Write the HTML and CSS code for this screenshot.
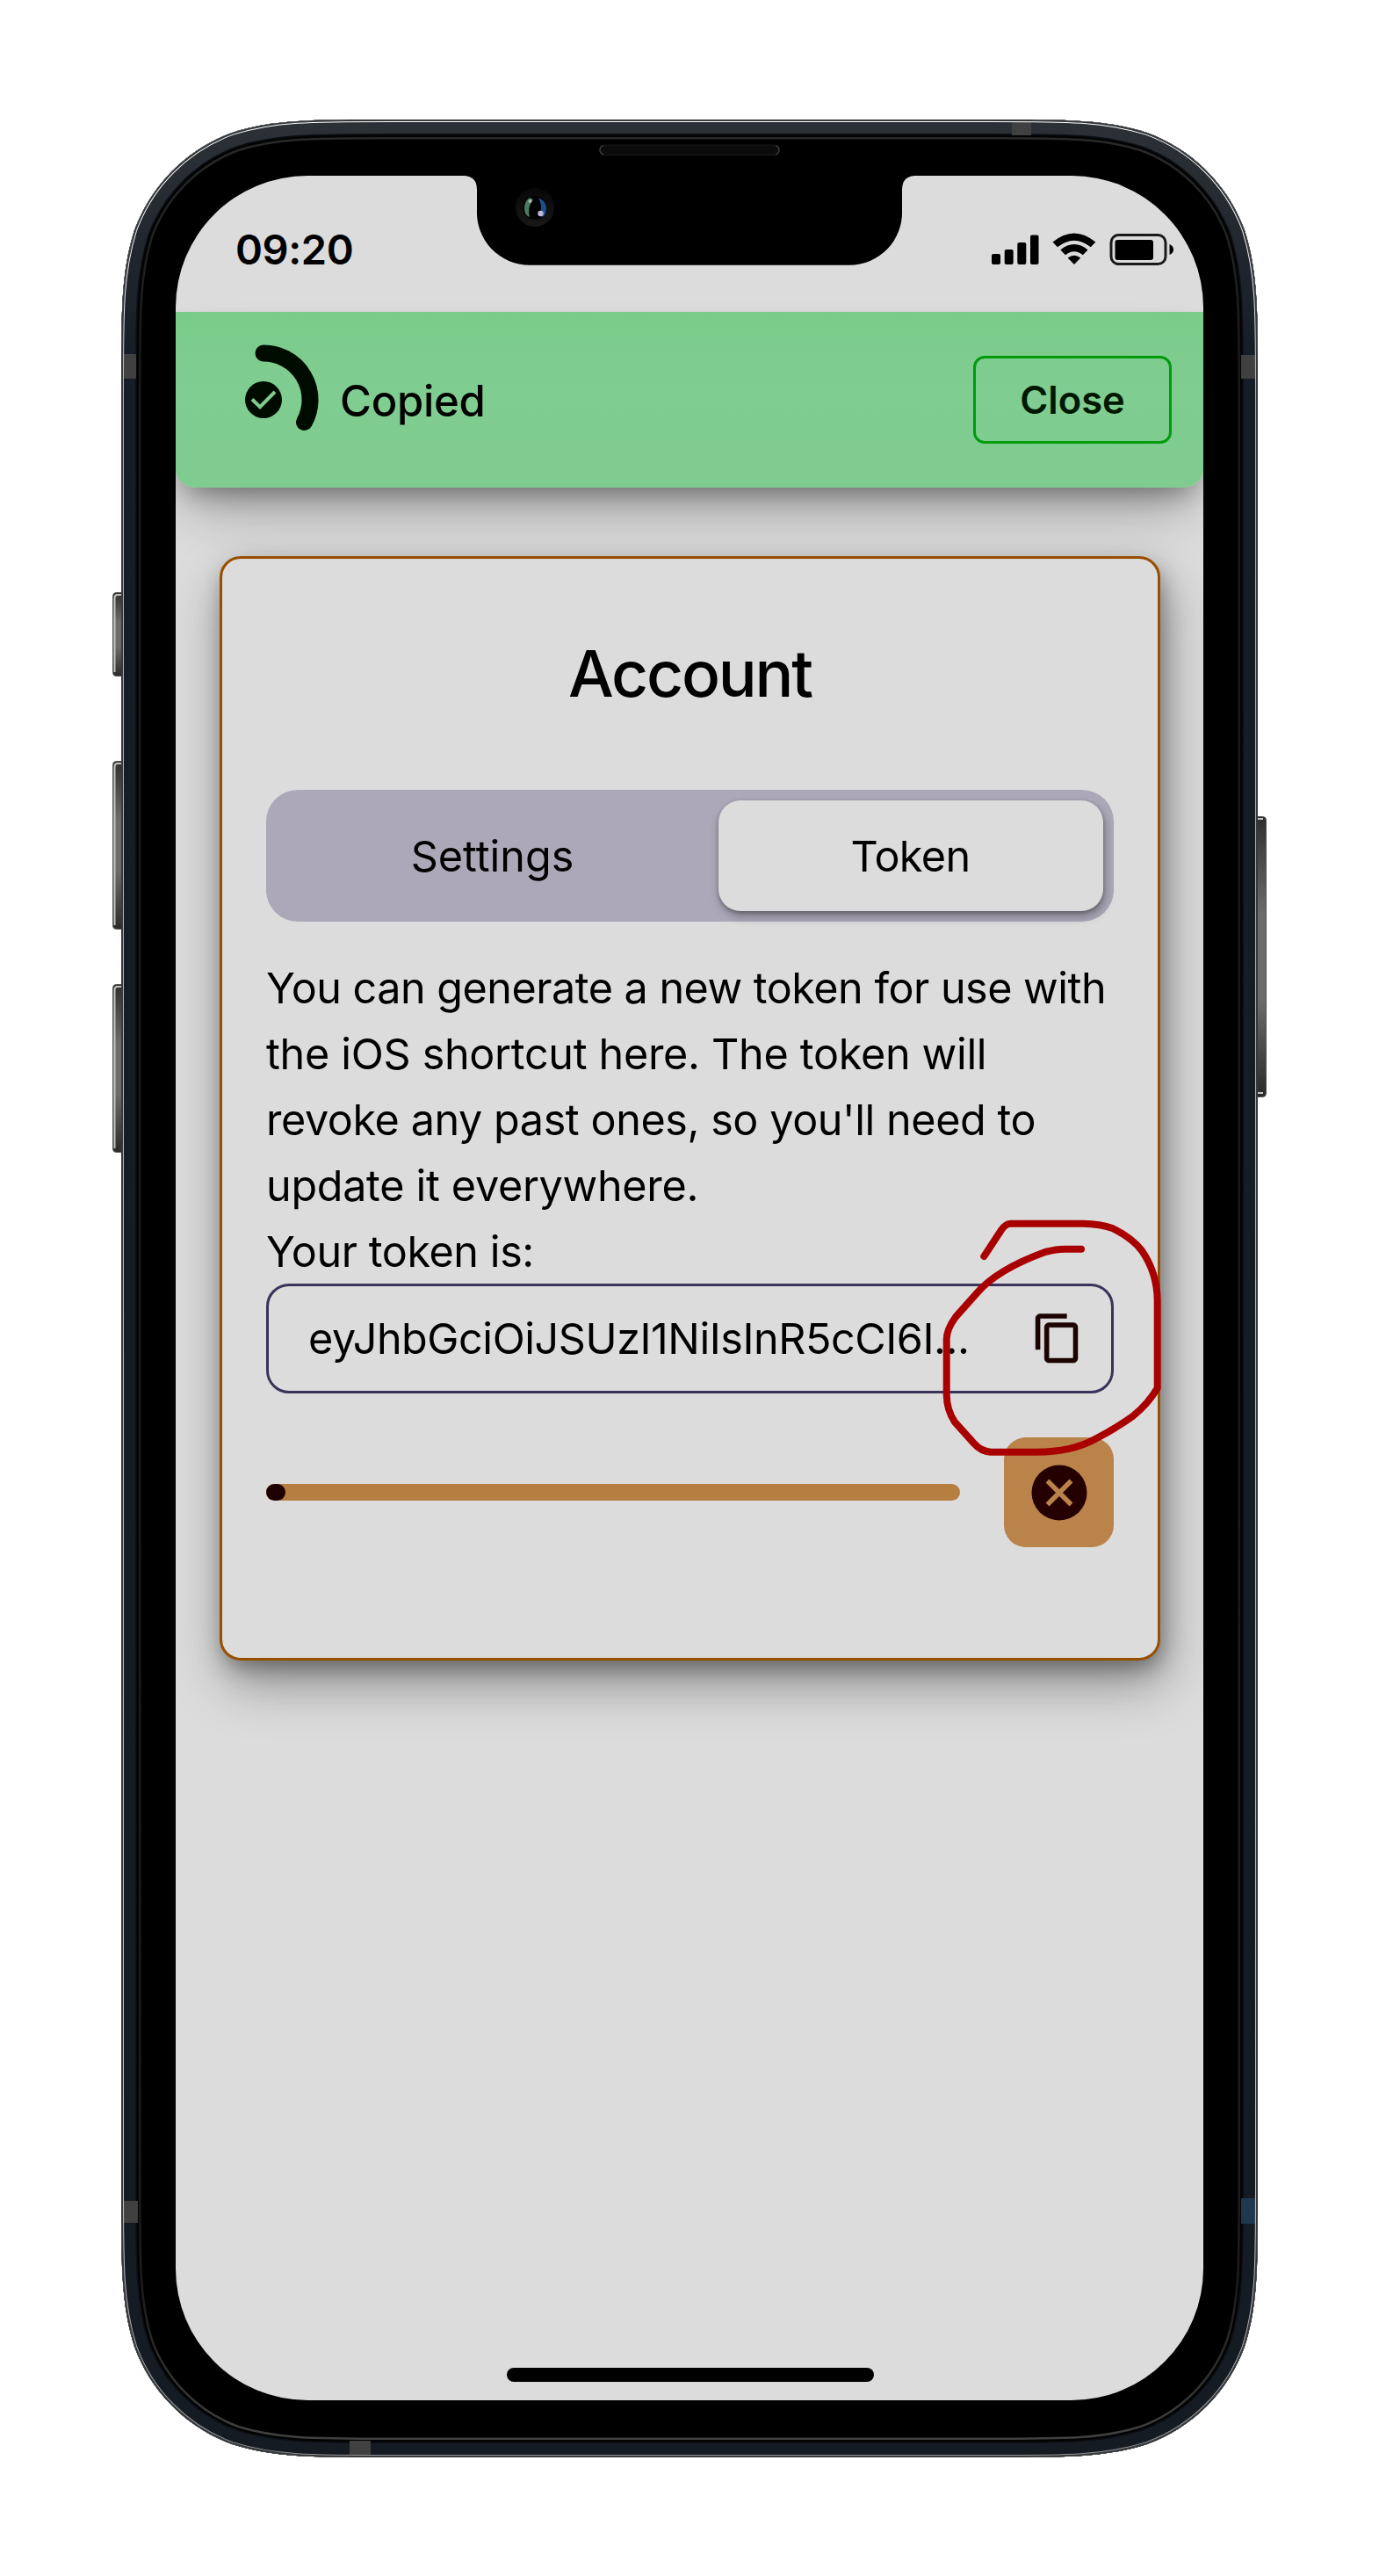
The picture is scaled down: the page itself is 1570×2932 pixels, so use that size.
FILE: index.html
```html
<!DOCTYPE html>
<html lang="en">
<head>
<meta charset="utf-8">
<title>Account</title>
<link rel="stylesheet" href="styles.css">
</head>
<body>
<main class="stage">
  <div class="phone">
    <svg class="phone-body" viewBox="-10 0 1314 2661" aria-hidden="true">
      <defs>
        <path id="shell" d="M305.7 0H988.3C1076.3 0 1120.3 0 1167.7 15C1219.4 33.8 1260.2 74.6 1279 126.3C1294 173.7 1294 217.7 1294 305.7V2355.3C1294 2443.3 1294 2487.3 1279 2534.7C1260.2 2586.4 1219.4 2627.2 1167.7 2646C1120.3 2661 1076.3 2661 988.3 2661H305.7C217.7 2661 173.7 2661 126.3 2646C74.6 2627.2 33.8 2586.4 15 2534.7C0 2487.3 0 2443.3 0 2355.3V305.7C0 217.7 0 173.7 15 126.3C33.8 74.6 74.6 33.8 126.3 15C173.7 0 217.7 0 305.7 0Z"/>
        <clipPath id="shell-clip"><use href="#shell"/></clipPath>
        <linearGradient id="metal" gradientUnits="userSpaceOnUse" x1="0" y1="0" x2="0" y2="2661">
          <stop offset="0" stop-color="#2b3136"/><stop offset=".03" stop-color="#272c32"/>
          <stop offset=".1" stop-color="#171d26"/><stop offset="1" stop-color="#151b22"/>
        </linearGradient>
        <linearGradient id="glint" gradientUnits="userSpaceOnUse" x1="0" y1="0" x2="0" y2="2661">
          <stop offset="0" stop-color="#ffffff"/><stop offset=".07" stop-color="#e8e8f0"/>
          <stop offset=".12" stop-color="#a9abbd"/><stop offset=".9" stop-color="#c0c2cc"/><stop offset="1" stop-color="#8f9296"/>
        </linearGradient>
        <linearGradient id="rim" gradientUnits="userSpaceOnUse" x1="0" y1="0" x2="0" y2="2661">
          <stop offset="0" stop-color="#2a2a2a"/><stop offset=".1" stop-color="#1a1a1a"/>
          <stop offset=".93" stop-color="#1c1c1c"/><stop offset="1" stop-color="#454545"/>
        </linearGradient>
        <linearGradient id="key" x1="0" y1="0" x2="0" y2="1">
          <stop offset="0" stop-color="#2f2f2f"/><stop offset=".35" stop-color="#6c6c6c"/>
          <stop offset=".65" stop-color="#6c6c6c"/><stop offset="1" stop-color="#2a2a2a"/>
        </linearGradient>
      </defs>
      <g fill="url(#key)" stroke="#555" stroke-width="1">
        <rect x="-9.5" y="538.5" width="16" height="95" rx="4"/>
        <rect x="-9.5" y="730.5" width="16" height="191" rx="4"/>
        <rect x="-9.5" y="984.5" width="16" height="191" rx="4"/>
        <rect x="1288" y="793.5" width="15.5" height="319" rx="4"/>
      </g>
      <path fill="none" stroke="#c4c4c0" stroke-width="2" d="M0 541H-4Q-7.500 541-7.500 545V629M0 733H-4Q-7.500 733-7.500 737V917M0 987H-4Q-7.500 987-7.500 991V1171M1294 796H1300M1294 1108H1300"/>
      <use href="#shell" fill="#000"/>
      <g clip-path="url(#shell-clip)" fill="none">
        <use href="#shell" stroke="url(#rim)" stroke-width="45"/>
        <use href="#shell" stroke="#030303" stroke-width="40"/>
        <use href="#shell" stroke="#0c1016" stroke-width="35"/>
        <use href="#shell" stroke="url(#metal)" stroke-width="32"/>
        <g stroke="none" fill="#404040">
          <rect x="0" y="267" width="17" height="28"/>
          <rect x="1014" y="0" width="22" height="18"/>
          <rect x="1275" y="268" width="19" height="27"/>
          <rect x="0" y="2369" width="19" height="25"/>
          <rect x="260" y="2642" width="24" height="19"/>
          <rect x="1275" y="2366" width="19" height="29" fill="#20384f"/>
        </g>
        <use href="#shell" stroke="url(#glint)" stroke-width="6"/>
        <use href="#shell" stroke="#38393b" stroke-width="4"/>
      </g>
    </svg>

    <div class="screen">
      <header class="status">
        <span class="time">09:20</span>
        <svg class="status-icons" viewBox="0 0 207 38" aria-hidden="true">
          <rect x="0" y="24" width="10" height="12" rx="2"/>
          <rect x="14.700" y="19" width="10" height="17" rx="2"/>
          <rect x="29.300" y="11" width="10" height="25" rx="2"/>
          <rect x="44" y="2.500" width="9.500" height="33.500" rx="2"/>
          <path d="M69.500 10.600Q94 -9.600 118.300 10.600L112.800 16.300Q94 1 75 16.300Z"/>
          <path d="M78.300 19.400Q94 6.600 109.500 19.400L103.800 25.200Q94 17.200 84 25.200Z"/>
          <path d="M86.600 28.400Q94 23 101.200 28.400L94 36Z"/>
          <rect x="136" y="2.500" width="62" height="33" rx="8.500" fill="none" stroke="#1a1a1a" stroke-width="3"/>
          <rect x="140.500" y="8" width="43.500" height="23" rx="3"/>
          <path d="M202.500 13Q207 15 207 19T202.500 25Z"/>
        </svg>
      </header>

      <div class="toast" role="status">
        <svg class="toast-icon" viewBox="0 0 126 126" aria-hidden="true">
          <path d="M63 10A53 53 0 0 1 109.500 88.500" fill="none" stroke="#000b00" stroke-width="19" stroke-linecap="round"/>
          <circle cx="63" cy="63" r="21" fill="#000b00"/>
          <path d="M50 62.500L59 71.200L76 54" fill="none" stroke="#7fcc90" stroke-width="4"/>
        </svg>
        <span class="toast-text">Copied</span>
        <button class="toast-close">Close</button>
      </div>

      <section class="card">
        <h1 class="card-title">Account</h1>
        <div class="tabs">
          <button class="tab">Settings</button>
          <button class="tab tab-active">Token</button>
        </div>
        <p class="copy">
          <span class="line-wide">You can generate a new token for use with</span><br>
          <span class="line">the iOS shortcut here. The token will</span><br>
          <span class="line-mid">revoke any past ones, so you'll need to</span><br>
          <span class="line">update it everywhere.</span><br>
          <span class="line-mid">Your token is:</span>
        </p>
        <div class="token">
          <span class="token-text">eyJhbGciOiJSUzI1NiIsInR5cCI6I...</span>
          <svg class="token-copy" viewBox="0 0 24 24" aria-hidden="true"><path d="M16 1H4c-1.1 0-2 .9-2 2v14h2V3h12V1zm3 4H8c-1.1 0-2 .9-2 2v14c0 1.100.9 2 2 2h11c1.100 0 2-.9 2-2V7c0-1.100-.9-2-2-2zm0 16H8V7h11v14z"/></svg>
        </div>
        <div class="countdown">
          <div class="bar"><div class="bar-fill"></div></div>
          <button class="cancel" aria-label="Cancel">
            <svg viewBox="0 0 64 64" aria-hidden="true"><circle cx="32" cy="32" r="31.500" fill="#250000"/><path d="M18.500 18.500L45.500 45.500M45.500 18.500L18.500 45.500" stroke="#b9834a" stroke-width="5.500"/></svg>
          </button>
        </div>
      </section>
      <div class="home-bar"></div>
    </div>

    <svg class="notch" viewBox="0 0 520 150" aria-hidden="true">
      <defs><linearGradient id="ring" x1="0" y1="0" x2="0" y2="1"><stop offset="0" stop-color="#070707"/><stop offset="1" stop-color="#181818"/></linearGradient></defs>
      <path d="M2 44V47H4Q18 48 18 63V86A60 60 0 0 0 78 148.700H442A60 60 0 0 0 502 86V63Q502 48 516 47H518V44Z" fill="#000"/>
      <rect x="158" y="12" width="204" height="11.500" rx="5.700" fill="#0c0c0c" stroke="#191919" stroke-width="1"/>
      <path d="M162 12.500Q158 14 158 17.700T162 23M358 12.500Q362 14 362 17.700T358 23" fill="none" stroke="#3a3a3a" stroke-width="1.500"/>
      <circle cx="84" cy="83" r="22" fill="url(#ring)"/>
      <circle cx="84" cy="83.500" r="13.500" fill="#020202"/>
      <path d="M78 72Q72 76 72 84T78 94Q75 83 82 74Z" fill="#4c7a62"/>
      <path d="M88 72Q97 76 97 84T92 94Q90 91 91 86T88 72Z" fill="#1d4f90"/>
      <circle cx="78.500" cy="76" r="2" fill="#a8bdb0"/>
      <circle cx="90.500" cy="90" r="3.200" fill="#bdbbd8"/>
    </svg>

    <svg class="scribble" viewBox="1060 1380 280 290" aria-hidden="true">
      <path d="M1120.300 1430L1140 1400Q1145 1392.700 1151 1392.700H1233Q1253 1393 1266.500 1398Q1289 1409 1300 1423.500Q1317.500 1449 1317.700 1480V1580Q1307 1598 1290 1611.700Q1270 1626 1246.700 1638Q1220 1652.700 1180 1652.700H1128Q1117 1652 1109 1643L1087 1618.500Q1078 1605 1077.700 1588V1526Q1077 1514 1088 1499L1112 1472Q1135 1445 1190 1425Q1203 1421.700 1212 1421.700H1231"/>
    </svg>
  </div>
</main>
</body>
</html>
```

FILE: styles.css
```css
* { box-sizing: border-box; }
body { margin: 0; background: #fff; font-family: Inter, "Liberation Sans", sans-serif; color: #000; }
button { font: inherit; color: inherit; border: 0; padding: 0; background: none; }
svg { display: block; }

.stage { width: 1570px; height: 2932px; padding: 136px 138px; overflow: hidden; }
.phone { position: relative; width: 1294px; height: 2661px; padding: 64px 62px; }
.phone-body { position: absolute; left: -10px; top: 0; width: 1314px; height: 2661px; }

.screen {
  position: relative; display: flex; flex-direction: column;
  width: 1170px; height: 2532px; overflow: hidden;
  background: #dcdcdc; border-radius: 150px;
}

.status { display: flex; flex: none; align-items: flex-start; justify-content: space-between; height: 155px; padding: 54px 34px 0 68px; }
.time { font-size: 47px; line-height: 60px; font-weight: 600; letter-spacing: -.4px; }
.status-icons { width: 207px; height: 38px; margin-top: 11px; }

.toast {
  position: relative; z-index: 1; flex: none;
  display: flex; align-items: center; height: 200px; padding: 0 36px 0 37px;
  background: linear-gradient(#7acb8a, #80cd91 45%, #80cc90);
  border-radius: 0 0 24px 24px / 0 0 20px 20px;
  box-shadow: 0 36px 60px -15px rgba(0, 0, 0, .32), 0 14px 28px -9px rgba(0, 0, 0, .32);
}
.toast-icon { width: 126px; height: 126px; }
.toast-text { flex: 1; margin-left: 24px; padding-top: 2px; font-size: 49px; font-weight: 500; letter-spacing: -.3px; }
.toast-close {
  width: 226px; height: 100px; border: 3.500px solid #009c0c; border-radius: 13px;
  color: #001800; font-size: 43.500px; font-weight: 600;
}

.card {
  flex: none; width: 1071px; height: 1257px; margin: 78px 0 0 50px; padding: 82px 50px 0;
  border: 3px solid #994f00; border-radius: 24px; background: #dcdcdc;
  box-shadow: 6px 26px 60px rgba(0, 0, 0, .36), 3px 10px 24px -2px rgba(0, 0, 0, .34);
}
.card-title { margin: 0; height: 98px; text-align: center; font-size: 73px; line-height: 98px; font-weight: 500; letter-spacing: -2.200px; }

.tabs {
  display: grid; grid-template-columns: 490px 438px; gap: 12px; height: 150px; margin-top: 83px; padding: 12px 12.500px;
  border-radius: 36px; background: #aca8b8;
}
.tab { border-radius: 25px; font-size: 48.500px; }
.tab-active { background: #dcdcdc; box-shadow: 2px 6px 12px rgba(0, 0, 0, .28), 0 2px 4px rgba(0, 0, 0, .28); letter-spacing: -.6px; }

.copy { margin: 38px 0 0; height: 374px; font-size: 48.500px; line-height: 75px; white-space: nowrap; }
.line { letter-spacing: -.3px; }
.line-mid { letter-spacing: -.420px; }
.line-wide { letter-spacing: -.5px; }

.token {
  display: flex; align-items: center; justify-content: space-between; height: 125px; padding: 0 30px 0 45px;
  border: 3px solid #38345a; border-radius: 26px; font-size: 48.500px;
}
.token-text { white-space: nowrap; letter-spacing: -.450px; }
.token-copy { width: 60.600px; height: 60.600px; fill: #1c0200; stroke: #1c0200; stroke-width: .2px; }

.countdown { display: flex; align-items: center; gap: 50px; margin-top: 50px; }
.bar { flex: 1; height: 19px; border-radius: 10px; background: #b67e41; }
.bar-fill { width: 22px; height: 19px; border-radius: 10px; background: #1e0000; }
.cancel { display: flex; align-items: center; justify-content: center; width: 125px; height: 125px; border-radius: 25px; background: #b9834a; }
.cancel svg { width: 64px; height: 64px; }

.home-bar { width: 418px; height: 16px; margin: auto auto 21px 377px; border-radius: 8px; background: #000; }

.notch { position: absolute; left: 387px; top: 17px; width: 520px; height: 150px; }
.scribble { position: absolute; left: 922px; top: 1244px; width: 280px; height: 290px; }
.scribble path { fill: none; stroke: #a90000; stroke-width: 8; stroke-linecap: round; stroke-linejoin: round; }
```
